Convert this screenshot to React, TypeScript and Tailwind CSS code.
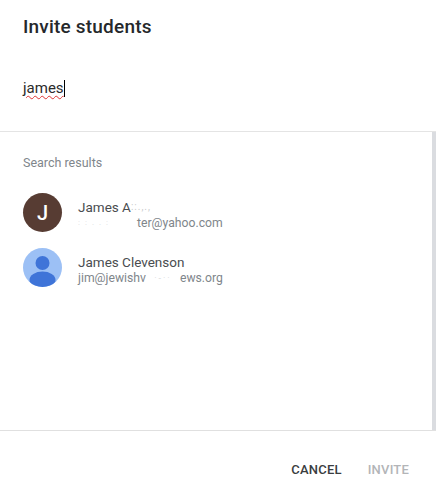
import React from 'react';

const font = { fontFamily: 'Roboto, "Liberation Sans", sans-serif' };

const App = () => {
    return (
        <div
            className="flex flex-col w-[436px] h-[500px] bg-white overflow-hidden"
            style={font}
        >
            <div className="h-[132px] shrink-0 pl-[23px] border-b border-[#e4e4e4]">
                <h1 className="pt-[15px] text-[19px] leading-[24px] font-medium tracking-[0.2px] text-[#25282b]">
                    Invite students
                </h1>
                <div className="mt-[39px] flex items-center h-[20px]">
                    <span className="text-[15px] leading-[20px] text-[#2b2b2b] underline decoration-wavy decoration-[#d33] decoration-1 underline-offset-2">
                        james
                    </span>
                    <span className="w-px h-[17px] bg-black" />
                </div>
            </div>

            <div className="flex-1 flex min-h-0">
                <div className="flex-1 pl-[23px] pt-[24px]">
                    <div className="text-[12.5px] leading-[14px] text-[#80868b]">
                        Search results
                    </div>

                    <div className="mt-[23px] flex items-center h-[39px] gap-[16px]">
                        <div className="w-[39px] h-[39px] rounded-full bg-[#573c33] flex items-center justify-center text-white text-[20px] font-medium">
                            J
                        </div>
                        <div className="pt-[4px]">
                            <div className="text-[13.5px] leading-[16px] text-[#4a4d50] flex items-center">
                                James A
                                <span className="opacity-30 tracking-[1px] text-[10px]">
                                    ::.,.,
                                </span>
                            </div>
                            <div className="text-[12.2px] leading-[16px] text-[#80868b] flex items-center">
                                <span className="w-[59px] opacity-30 tracking-[5px] text-[8px]">
                                    ::..:
                                </span>
                                ter@yahoo.com
                            </div>
                        </div>
                    </div>

                    <div className="mt-[16px] flex items-center h-[39px] gap-[16px]">
                        <svg
                            width="39"
                            height="39"
                            viewBox="0 0 39 39"
                            className="shrink-0"
                        >
                            <defs>
                                <clipPath id="person-clip">
                                    <circle cx="19.5" cy="19.5" r="19.5" />
                                </clipPath>
                            </defs>
                            <circle cx="19.5" cy="19.5" r="19.5" fill="#9cc0f5" />
                            <g clipPath="url(#person-clip)">
                                <circle cx="19.5" cy="15" r="7" fill="#3f74d8" />
                                <ellipse cx="19.5" cy="32" rx="13" ry="8.5" fill="#3f74d8" />
                            </g>
                        </svg>
                        <div className="pt-[4px]">
                            <div className="text-[13.5px] leading-[16px] text-[#4a4d50]">
                                James Clevenson
                            </div>
                            <div className="text-[12.2px] leading-[16px] text-[#80868b] flex items-center">
                                jim@jewishv
                                <span className="w-[34px] text-center opacity-30 text-[9px] tracking-[2px]">
                                    ·-··
                                </span>
                                ews.org
                            </div>
                        </div>
                    </div>
                </div>
                <div className="w-[4px] bg-[#dadce0]" />
            </div>

            <div className="h-[70px] shrink-0 border-t border-[#e0e0e0] flex items-center justify-end pr-[27px] gap-[26px] pt-[9px]">
                <button className="text-[13px] font-medium tracking-[0.2px] text-[#3a3d40]">
                    CANCEL
                </button>
                <button className="text-[13px] font-medium tracking-[0.2px] text-[#b3b5b8]">
                    INVITE
                </button>
            </div>
        </div>
    );
};

export default App;
